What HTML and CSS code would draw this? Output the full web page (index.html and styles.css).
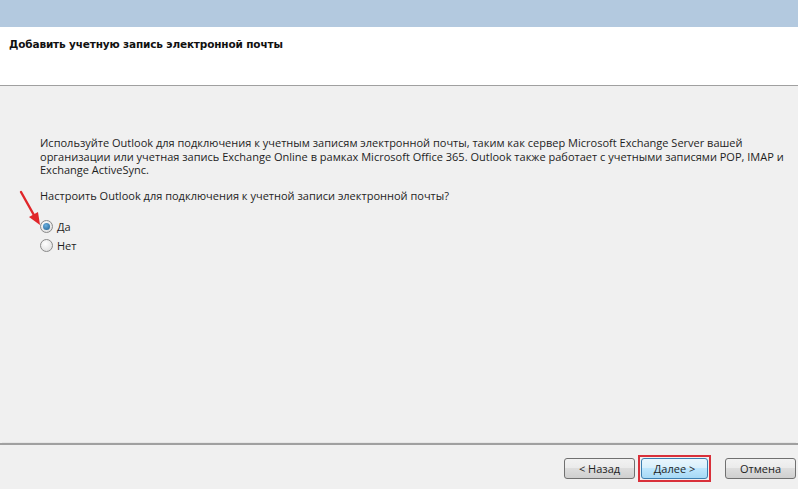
FILE: index.html
```html
<!DOCTYPE html>
<html lang="ru">
<head>
<meta charset="utf-8">
<link rel="stylesheet" href="styles.css">
</head>
<body>
<div class="window">
  <div class="topbar"></div>
  <div class="header">
    <h1 class="title">Добавить учетную запись электронной почты</h1>
  </div>
  <div class="content">
    <p class="intro">Используйте Outlook для подключения к учетным записям электронной почты, таким как сервер Microsoft Exchange Server вашей организации или учетная запись Exchange Online в рамках Microsoft Office 365. Outlook также работает с учетными записями POP, IMAP и Exchange ActiveSync.</p>
    <p class="question">Настроить Outlook для подключения к учетной записи электронной почты?</p>
    <div class="options">
      <label class="option"><span class="radio checked"></span>Да</label>
      <label class="option"><span class="radio"></span>Нет</label>
    </div>
    <svg class="arrow" width="24" height="36" viewBox="0 0 24 36">
      <line x1="3" y1="2" x2="17" y2="27" stroke="#e0262a" stroke-width="2.4" stroke-linecap="round"/>
      <polygon points="22,35 11,27 20,22" fill="#e0262a"/>
    </svg>
  </div>
  <div class="footer">
    <button class="btn">&lt; Назад</button>
    <span class="highlight"><button class="btn primary">Далее &gt;</button></span>
    <button class="btn">Отмена</button>
  </div>
</div>
</body>
</html>
```
FILE: styles.css
```css
html, body {
  margin: 0;
  padding: 0;
}
body {
  width: 798px;
  height: 489px;
  overflow: hidden;
  background: #f0f0f0;
  font-family: "DejaVu Sans", "Liberation Sans", sans-serif;
  color: #1e1e1e;
}
.window {
  display: flex;
  flex-direction: column;
  height: 489px;
}
.topbar {
  height: 27px;
  background: #b3c9df;
}
.header {
  height: 59px;
  background: #ffffff;
  border-bottom: 1px solid #a0a0a0;
  box-sizing: border-box;
  padding: 11px 0 0 9px;
}
.title {
  margin: 0;
  font-family: "DejaVu Sans", sans-serif;
  font-weight: bold;
  font-size: 10.5px;
  letter-spacing: -0.15px;
  color: #111;
}
.content {
  position: relative;
  flex: 1;
  padding: 50px 0 0 40px;
  font-family: "Open Sans", "Noto Sans", sans-serif;
  font-size: 11.03px;
  line-height: 13.5px;
  color: #1e1e1e;
}
.intro {
  margin: 0;
  width: 752px;
}
.question {
  margin: 12px 0 0 0;
}
.options {
  margin-top: 18px;
  display: flex;
  flex-direction: column;
  gap: 6px;
}
.option {
  display: flex;
  align-items: center;
  gap: 4px;
  height: 13px;
}
.radio {
  width: 11px;
  height: 11px;
  border-radius: 50%;
  border: 1px solid #8a8a8a;
  background: radial-gradient(circle at 40% 35%, #ffffff, #d8d8d8);
  position: relative;
}
.radio.checked::after {
  content: "";
  position: absolute;
  left: 2px;
  top: 2px;
  width: 7px;
  height: 7px;
  border-radius: 50%;
  background: radial-gradient(circle at 40% 35%, #6ab0e0, #1d5d8e);
}
.arrow {
  position: absolute;
  left: 18px;
  top: 104px;
}
.footer {
  height: 42px;
  border-top: 2px solid #a0a0a0;
  box-shadow: 0 -3px 0 -2px #e6e6e6;
  display: flex;
  align-items: center;
  justify-content: flex-end;
  padding: 2px 2px 0 0;
  gap: 3px;
}
.btn {
  width: 71px;
  height: 21px;
  border: 1px solid #707070;
  border-radius: 3px;
  background: linear-gradient(#f2f2f2 0%, #ebebeb 45%, #dddddd 50%, #cfcfcf 100%);
  font-family: "Open Sans", "Noto Sans", sans-serif;
  font-size: 11.03px;
  color: #1e1e1e;
  padding: 0;
  margin: 0;
}
.btn.primary {
  width: 67px;
  border-color: #3c7fb1;
  background: linear-gradient(#eaf6fd 0%, #d9f0fc 45%, #bee6fd 50%, #a7d9f5 100%);
}
.highlight {
  display: flex;
  border: 2px solid #d9303a;
  padding: 1px;
  margin-right: 11px;
}
```
